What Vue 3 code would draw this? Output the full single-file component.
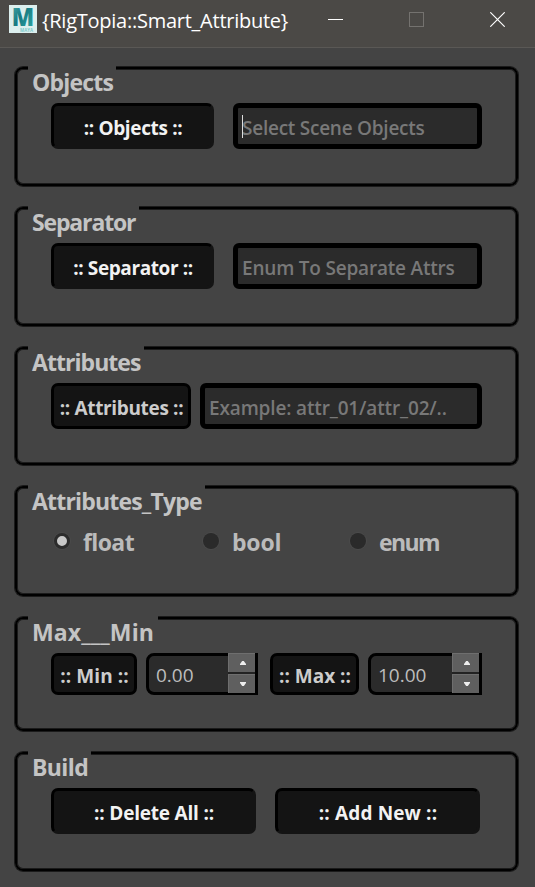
<script setup>
import { ref } from 'vue'

const selectRows = [
  { key: 'objects', title: 'Objects', button: ':: Objects ::', placeholder: 'Select Scene Objects', raised: true, focused: true },
  { key: 'separator', title: 'Separator', button: ':: Separator ::', placeholder: 'Enum To Separate Attrs', raised: true, focused: false },
  { key: 'attributes', title: 'Attributes', button: ':: Attributes ::', placeholder: 'Example: attr_01/attr_02/..', raised: false, focused: false },
]
const types = ['float', 'bool', 'enum']
const type = ref('float')
const limits = ref([
  { key: 'min', label: ':: Min ::', value: 0 },
  { key: 'max', label: ':: Max ::', value: 10 },
])
</script>

<template>
  <div class="window">
    <header class="titlebar">
      <svg class="logo" viewBox="0 0 28 28">
        <defs>
          <linearGradient id="teal" x1="0" y1="0" x2="1" y2="1">
            <stop offset="0" stop-color="#4fb0b0" />
            <stop offset="0.45" stop-color="#187a82" />
            <stop offset="1" stop-color="#2fadaa" />
          </linearGradient>
        </defs>
        <rect width="28" height="28" fill="#dcefee" />
        <text class="logo-m" x="2.8" y="21" textLength="22.4" lengthAdjust="spacingAndGlyphs" fill="url(#teal)">M</text>
        <text class="logo-sub" x="11" y="26.5" textLength="13" lengthAdjust="spacingAndGlyphs">MAYA</text>
      </svg>
      <h1>{RigTopia::Smart_Attribute}</h1>
      <svg class="win-icon minimize" viewBox="0 0 15 15"><path d="M0 7.5H15" stroke="#fff" /></svg>
      <svg class="win-icon maximize" viewBox="0 0 15 15"><rect x="0.5" y="0.5" width="14" height="14" fill="none" stroke="#74726f" /></svg>
      <svg class="win-icon close" viewBox="0 0 15 15"><path d="M0.3 0.3L14.7 14.7M14.7 0.3L0.3 14.7" stroke="#fff" stroke-width="1.15" /></svg>
    </header>

    <main>
      <section v-for="row in selectRows" :key="row.key" class="group" :class="row.key">
        <h2>{{ row.title }}</h2>
        <div class="controls">
          <button class="btn" :class="{ raised: row.raised }">{{ row.button }}</button>
          <div class="field"><i v-if="row.focused" class="caret"></i><span>{{ row.placeholder }}</span></div>
        </div>
      </section>

      <section class="group type">
        <h2>Attributes_Type</h2>
        <div class="radios">
          <label v-for="t in types" :key="t" :class="t" @click="type = t">
            <i class="radio" :class="{ on: type === t }"></i><span>{{ t }}</span>
          </label>
        </div>
      </section>

      <section class="group limits">
        <h2>Max___Min</h2>
        <div class="controls">
          <template v-for="l in limits" :key="l.key">
            <button class="btn" :class="l.key">{{ l.label }}</button>
            <div class="spin" :class="l.key + '-spin'">
              <span>{{ l.value.toFixed(2) }}</span>
              <div class="steps">
                <button @click="l.value++"><svg viewBox="0 0 6 4"><path d="M0 4V3L2.2 0H3.8L6 3V4Z" fill="#eee" /></svg></button>
                <button @click="l.value--"><svg viewBox="0 0 6 4"><path d="M0 0V1L2.2 4H3.8L6 1V0Z" fill="#eee" /></svg></button>
              </div>
            </div>
          </template>
        </div>
      </section>

      <section class="group build">
        <h2>Build</h2>
        <div class="controls">
          <button class="btn raised delete">:: Delete All ::</button>
          <button class="btn raised add">:: Add New ::</button>
        </div>
      </section>
    </main>
  </div>
</template>

<style>
body {
  background: #444;
}
</style>

<style scoped>
* {
  box-sizing: border-box;
}
.window {
  width: 535px;
  height: 887px;
  overflow: hidden;
  background: #444;
  font-family: "Open Sans", "Noto Sans", sans-serif;
  white-space: nowrap;
}
button {
  font-family: inherit;
  margin: 0;
  padding: 0;
}
.titlebar {
  display: flex;
  align-items: flex-start;
  height: 48px;
  padding-left: 9px;
  background: #4b4946;
  border-bottom: 1px solid #5a5855;
}
.logo {
  width: 28px;
  height: 28px;
  margin-top: 5px;
}
.logo-m {
  font: 800 25px "Open Sans", sans-serif;
}
.logo-sub {
  font: 700 5px "Open Sans", sans-serif;
  fill: #7ccaca;
}
h1 {
  width: 286px;
  margin: 0;
  padding-left: 5px;
  font-size: 20px;
  font-weight: 400;
  line-height: 42px;
  letter-spacing: -0.25px;
  color: #fff;
}
.win-icon {
  flex: none;
  width: 15px;
  height: 15px;
  margin-top: 12px;
}
.minimize {
  margin-left: 5px;
}
.maximize {
  margin-left: 66px;
}
.close {
  margin-left: 66px;
}
main {
  display: flex;
  flex-direction: column;
  gap: 21px;
  padding: 19px 17px 0 15px;
}
.group {
  height: 119px;
  border: 2px solid #000;
  border-radius: 8px;
  box-shadow: 0 0 0 1px rgba(0, 0, 0, 0.6), inset 0 0 0 1px rgba(0, 0, 0, 0.6);
}
.group.attributes {
  height: 118px;
}
.group.type {
  height: 110px;
}
.group.limits {
  height: 114px;
}
h2 {
  width: 88px;
  height: 32px;
  margin: -3px 0 5px 11px;
  padding-left: 4px;
  background: #444;
  font-size: 23px;
  font-weight: 700;
  line-height: 32px;
  letter-spacing: -0.8px;
  color: #c4c4c4;
}
.separator h2 {
  width: 111px;
  letter-spacing: -1.15px;
}
.attributes h2 {
  width: 116px;
  letter-spacing: -0.95px;
}
.type h2 {
  width: 177px;
  letter-spacing: -0.82px;
}
.limits h2 {
  width: 130px;
  letter-spacing: 0.1px;
}
.build h2 {
  width: 63px;
  letter-spacing: -0.6px;
}
.controls {
  display: flex;
  width: 431px;
  height: 46px;
  margin-left: 34px;
}
.limits .controls {
  height: 42px;
}
.btn {
  flex: none;
  padding: 3px 0 0 1px;
  background: #141414;
  border: 3px solid #000;
  border-radius: 7px;
  font-size: 19px;
  font-weight: 700;
  line-height: 26px;
  color: #ccc;
}
.btn.raised {
  border-color: #000 #141414 #141414 #000;
  color: #f2f2f2;
}
.objects .btn {
  width: 163px;
  margin-right: 19px;
  letter-spacing: -0.35px;
}
.separator .btn {
  width: 163px;
  margin-right: 19px;
  letter-spacing: -0.4px;
}
.attributes .btn {
  width: 140px;
  margin-right: 9px;
  letter-spacing: -0.35px;
}
.btn.min {
  width: 86px;
  margin-right: 9px;
  letter-spacing: 0.1px;
}
.btn.max {
  width: 89px;
  margin: 0 9px 0 12px;
  letter-spacing: 0;
}
.btn.delete {
  width: 205px;
  margin-right: 19px;
  letter-spacing: -0.2px;
}
.btn.add {
  width: 205px;
  letter-spacing: 0.15px;
}
.field {
  position: relative;
  flex: 1;
  padding: 2px 0 0 4px;
  background: #2b2b2b;
  border: 5px solid #000;
  border-radius: 6px;
  font-size: 19px;
  font-weight: 600;
  line-height: 36px;
  letter-spacing: -0.25px;
  color: #787878;
}
.separator .field {
  letter-spacing: -0.2px;
}
.attributes .field {
  letter-spacing: -0.15px;
}
.caret {
  position: absolute;
  left: 4px;
  top: 7px;
  width: 1px;
  height: 23px;
  background: #ddd;
}
.radios {
  display: flex;
  height: 46px;
  margin-left: 36px;
}
.radios label {
  display: flex;
  width: 147px;
  font-size: 23px;
  font-weight: 700;
  line-height: 41px;
  color: #bbb;
}
.radios .float {
  width: 149px;
  letter-spacing: -0.6px;
}
.radios .bool {
  letter-spacing: -0.2px;
}
.radios .enum {
  letter-spacing: -1.6px;
}
.radio {
  width: 16px;
  height: 16px;
  margin: 11px 13px 0 1px;
  background: #2a2a2a;
  border-radius: 50%;
  box-shadow: 0 0 0 1px #4a4a4a;
}
.radio.on {
  background: #c8c8c8;
  border: 3px solid #2c2c2c;
}
.spin {
  display: flex;
  justify-content: space-between;
  background: #2b2b2b;
  border: 3px solid #000;
  border-radius: 8px 0 0 8px;
  font-size: 19px;
  line-height: 38px;
  color: #bdbdbd;
}
.spin > span {
  height: 36px;
  padding-left: 7px;
}
.min-spin {
  width: 112px;
}
.max-spin {
  width: 114px;
}
.steps {
  display: grid;
  grid-template-rows: 19px 19px;
  gap: 2px;
  width: 27px;
  height: 40px;
  margin-top: -3px;
  background: #222;
}
.steps button {
  display: flex;
  align-items: center;
  justify-content: center;
  padding-left: 2px;
  background: #5f5f5f;
  border: solid #6e6e6e;
  border-width: 1px 0 0 1px;
}
.steps svg {
  width: 6px;
  height: 4px;
}
</style>
